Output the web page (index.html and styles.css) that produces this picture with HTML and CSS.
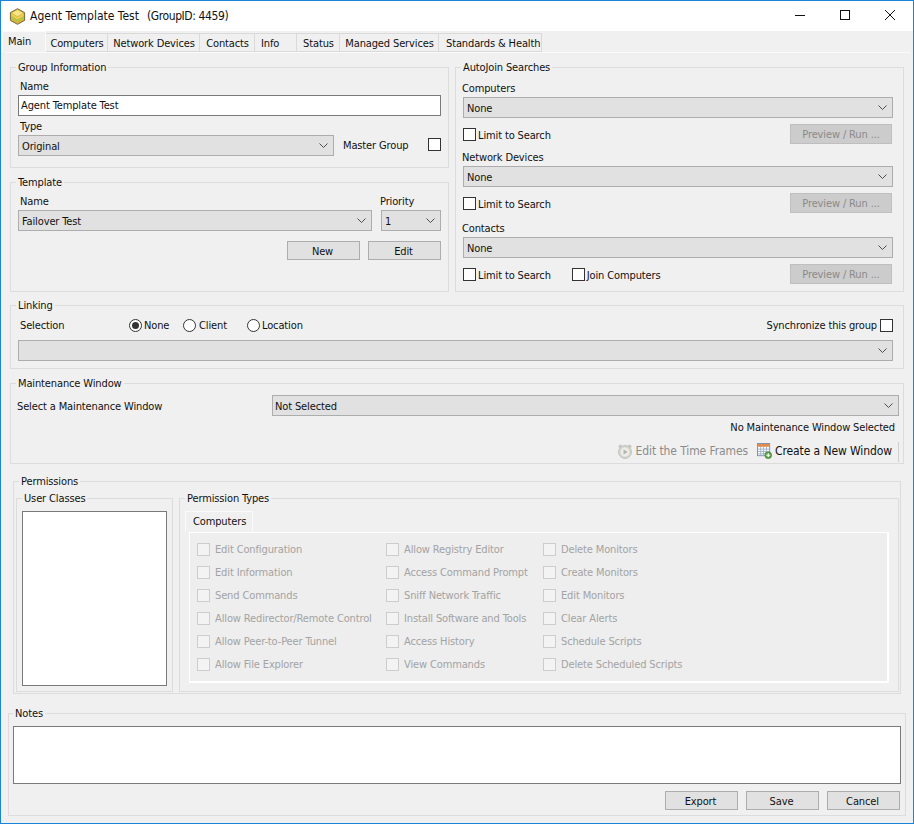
FILE: index.html
```html
<!DOCTYPE html>
<html lang="en">
<head>
<meta charset="utf-8">
<title>Agent Template Test</title>
<link rel="stylesheet" href="styles.css">
</head>
<body>
<svg class="defs" width="0" height="0" aria-hidden="true"><symbol id="chev" viewBox="0 0 9 5"><path d="M.5.5 4.5 4.5 8.5.5" fill="none" stroke="#4d4d4d" stroke-width="1"/></symbol></svg>
<div class="window">
  <header class="titlebar">
    <svg class="appicon" width="17" height="17" viewBox="0 0 17 17"><path d="M8.5.7 15.6 4.6V12.4L8.5 16.3 1.4 12.4V4.6Z" fill="#d9b53c" stroke="#77693a"/><path d="M8.5 2 14 5 8.5 8.2 3 5Z" fill="#f6e68a"/><path d="M2.5 8 8.5 11.4 14.5 8V10L8.5 13.4 2.5 10Z" fill="#a8c94a"/><path d="M2.5 5.6 8.5 9 14.5 5.6V8L8.5 11.4 2.5 8Z" fill="#eccd52"/></svg>
    <span class="title">Agent Template Test</span>
    <span class="title groupid">(GroupID: 4459)</span>
    <div class="controls">
      <svg width="12" height="12" viewBox="0 0 12 12"><path d="M1 6.5H11" stroke="#111" fill="none"/></svg>
      <svg width="12" height="12" viewBox="0 0 12 12"><rect x="1.5" y="1.5" width="9" height="9" stroke="#111" fill="none"/></svg>
      <svg width="12" height="12" viewBox="0 0 12 12"><path d="M1 1 11 11M11 1 1 11" stroke="#111" fill="none"/></svg>
    </div>
  </header>
  <nav class="tabs">
    <span class="tab active">Main</span>
    <span class="tab">Computers</span>
    <span class="tab">Network Devices</span>
    <span class="tab">Contacts</span>
    <span class="tab tab-left">Info</span>
    <span class="tab">Status</span>
    <span class="tab">Managed Services</span>
    <span class="tab tab-last">Standards &amp; Health</span>
  </nav>
  <main class="panel">
    <div class="top-grid">
      <div class="left-col">
        <fieldset class="box group-info">
          <legend>Group Information</legend>
          <label class="lbl">Name</label>
          <div class="input">Agent Template Test</div>
          <label class="lbl lbl-type">Type</label>
          <div class="type-row">
            <div class="select type-select"><span>Original</span><svg class="chev"><use href="#chev"/></svg></div>
            <span class="master">Master Group</span>
            <span class="check"></span>
          </div>
        </fieldset>
        <fieldset class="box template">
          <legend>Template</legend>
          <div class="tpl-grid">
            <label class="lbl">Name</label>
            <label class="lbl">Priority</label>
            <div class="select"><span>Failover Test</span><svg class="chev"><use href="#chev"/></svg></div>
            <div class="select prio"><span>1</span><svg class="chev"><use href="#chev"/></svg></div>
          </div>
          <div class="tpl-btns">
            <button class="btn">New</button>
            <button class="btn">Edit</button>
          </div>
        </fieldset>
      </div>
      <fieldset class="box autojoin">
        <legend>AutoJoin Searches</legend>
        <label class="aj-lbl first">Computers</label>
        <div class="select"><span>None</span><svg class="chev"><use href="#chev"/></svg></div>
        <div class="aj-row"><span class="check"></span><span class="chk-text">Limit to Search</span><button class="btn-dis">Preview / Run ...</button></div>
        <label class="aj-lbl">Network Devices</label>
        <div class="select"><span>None</span><svg class="chev"><use href="#chev"/></svg></div>
        <div class="aj-row"><span class="check"></span><span class="chk-text">Limit to Search</span><button class="btn-dis">Preview / Run ...</button></div>
        <label class="aj-lbl contacts">Contacts</label>
        <div class="select"><span>None</span><svg class="chev"><use href="#chev"/></svg></div>
        <div class="aj-row"><span class="check"></span><span class="chk-text join-gap">Limit to Search</span><span class="check"></span><span class="chk-text">Join Computers</span><button class="btn-dis">Preview / Run ...</button></div>
      </fieldset>
    </div>
    <fieldset class="box linking">
      <legend>Linking</legend>
      <div class="link-row">
        <span class="sel-lbl">Selection</span>
        <span class="radio on"></span><span class="r-text r-none">None</span>
        <span class="radio"></span><span class="r-text r-client">Client</span>
        <span class="radio"></span><span class="r-text">Location</span>
        <span class="sync">Synchronize this group</span>
        <span class="check"></span>
      </div>
      <div class="select"><span></span><svg class="chev"><use href="#chev"/></svg></div>
    </fieldset>
    <fieldset class="box maint">
      <legend>Maintenance Window</legend>
      <div class="m-row">
        <span class="m-lbl">Select a Maintenance Window</span>
        <div class="select m-select"><span>Not Selected</span><svg class="chev"><use href="#chev"/></svg></div>
      </div>
      <div class="m-status">No Maintenance Window Selected</div>
      <div class="m-tools">
        <svg width="16" height="17" viewBox="0 0 17 17"><path d="M2 4 4.500 1.500M15 4 12.500 1.500" stroke="#c4c4c0" stroke-width="2.200" fill="none"/><circle cx="8.500" cy="9" r="6.800" fill="#d6d6d0" stroke="#bcbcb6"/><circle cx="8.500" cy="9" r="4.800" fill="#ecece8"/><path d="M7 6.300 11.300 9 7 11.700Z" fill="#b4b4ae"/></svg>
        <span class="tool dis">Edit the Time Frames</span>
        <svg class="cal" width="15" height="16" viewBox="0 0 16 17"><rect x=".5" y=".5" width="13" height="13" fill="#fff" stroke="#7d8ea8"/><rect x="1" y="1" width="12" height="3" fill="#e08a4c"/><path d="M1 6.500H13M1 9H13M1 11.500H13M4 4V13M7 4V13M10 4V13" stroke="#9fb2c9" fill="none"/><circle cx="12" cy="13" r="3.600" fill="#58a845" stroke="#3e7f30" stroke-width=".7"/><path d="M12 11V15M10 13H14" stroke="#fff" stroke-width="1.200"/></svg>
        <span class="tool">Create a New Window</span>
        <span class="tool-sep"></span>
      </div>
    </fieldset>
    <fieldset class="box perms">
      <legend>Permissions</legend>
      <div class="perm-grid">
        <fieldset class="box classes">
          <legend>User Classes</legend>
          <div class="listbox"></div>
        </fieldset>
        <fieldset class="box types">
          <legend>Permission Types</legend>
          <span class="subtab">Computers</span>
          <div class="subpanel">
            <div class="p-item"><span class="p-check"></span>Edit Configuration</div>
            <div class="p-item"><span class="p-check"></span>Allow Registry Editor</div>
            <div class="p-item"><span class="p-check"></span>Delete Monitors</div>
            <div class="p-item"><span class="p-check"></span>Edit Information</div>
            <div class="p-item"><span class="p-check"></span>Access Command Prompt</div>
            <div class="p-item"><span class="p-check"></span>Create Monitors</div>
            <div class="p-item"><span class="p-check"></span>Send Commands</div>
            <div class="p-item"><span class="p-check"></span>Sniff Network Traffic</div>
            <div class="p-item"><span class="p-check"></span>Edit Monitors</div>
            <div class="p-item"><span class="p-check"></span>Allow Redirector/Remote Control</div>
            <div class="p-item"><span class="p-check"></span>Install Software and Tools</div>
            <div class="p-item"><span class="p-check"></span>Clear Alerts</div>
            <div class="p-item"><span class="p-check"></span>Allow Peer-to-Peer Tunnel</div>
            <div class="p-item"><span class="p-check"></span>Access History</div>
            <div class="p-item"><span class="p-check"></span>Schedule Scripts</div>
            <div class="p-item"><span class="p-check"></span>Allow File Explorer</div>
            <div class="p-item"><span class="p-check"></span>View Commands</div>
            <div class="p-item"><span class="p-check"></span>Delete Scheduled Scripts</div>
          </div>
        </fieldset>
      </div>
    </fieldset>
    <fieldset class="box notes">
      <legend>Notes</legend>
      <div class="notes-area"></div>
      <div class="actions">
        <button class="btn">Export</button>
        <button class="btn">Save</button>
        <button class="btn">Cancel</button>
      </div>
    </fieldset>
  </main>
</div>
</body>
</html>
```
FILE: styles.css
```css
* { box-sizing: border-box; }
html, body { margin: 0; padding: 0; }
body { width: 914px; height: 824px; overflow: hidden; font-family: "DejaVu Sans Condensed", "DejaVu Sans", sans-serif; font-size: 11px; line-height: 14px; letter-spacing: -0.13px; color: #111; }
.defs { position: absolute; }
.window { width: 914px; height: 824px; border: 1px solid #1a84d8; background: #f0f0f0; display: flex; flex-direction: column; }
.titlebar { height: 30px; flex: none; background: #fff; display: flex; align-items: center; padding-left: 8px; }
.appicon { margin-right: 4px; }
.title { font-size: 12px; letter-spacing: 0; color: #111; }
.groupid { margin-left: 8px; letter-spacing: -0.4px; }
.controls { margin-left: auto; margin-top: -2px; display: flex; gap: 33px; padding-right: 17px; }
.tabs { height: 21px; flex: none; display: grid; grid-template-columns: 44px 62px 92px 55px 42px 43px 99px 103px; justify-content: start; padding-left: 1px; align-items: end; }
.tab { height: 19px; border: 1px solid #dadada; border-left: 0; text-align: center; line-height: 20px; padding-left: 1px; background: #f0f0f0; }
.tab.tab-left { text-align: left; padding-left: 6px; }
.tab.tab-last { text-align: left; padding-left: 7px; }
.tab.active { height: 21px; border: 1px solid #fafafa; border-bottom: 0; line-height: 19px; text-align: left; padding-left: 5px; }
.panel { flex: 1; margin: 0 3px 0 4px; border-top: 1px solid #fafafa; padding: 7px 6px 0 5px; display: flex; flex-direction: column; }
.top-grid { display: grid; grid-template-columns: 439px 449px; gap: 6px; }
.left-col { display: flex; flex-direction: column; gap: 7px; }
.box { margin: 0; padding: 0 7px; border: 1px solid #dcdcdc; min-width: 0; flex: none; }
.box > legend { padding: 0 2px; margin-left: -2px; height: 14px; line-height: 16px; }
.lbl { display: block; padding-left: 2px; height: 14px; line-height: 16px; }
.group-info { height: 108px; }
.group-info > .lbl:first-of-type { margin-top: 5px; }
.input { height: 21px; margin-top: 2px; border: 1px solid #7a7a7a; background: #fff; padding-left: 2px; line-height: 19px; }
.lbl-type { margin-top: 3px; }
.type-row { display: flex; align-items: center; margin-top: 2px; }
.select { height: 21px; border: 1px solid #adadad; background: #e1e1e1; display: flex; align-items: center; justify-content: space-between; padding: 0 5px 0 3px; }
.select span { padding-top: 2px; }
.chev { width: 9px; height: 5px; flex: none; }
.type-select { width: 316px; }
.master { margin-left: 9px; }
.check { display: block; width: 13px; height: 13px; flex: none; border: 1px solid #333; background: #fff; }
.type-row .check { margin-left: auto; margin-top: -2px; }
.template { height: 117px; }
.tpl-grid { display: grid; grid-template-columns: 354px 60px; column-gap: 9px; row-gap: 2px; padding-top: 5px; }
.tpl-grid .lbl:nth-child(2) { padding-left: 0; margin-left: -1px; }
.prio { padding-left: 3px; }
.tpl-btns { display: flex; justify-content: flex-end; gap: 8px; margin-top: 10px; }
.btn { width: 73px; height: 19px; padding: 2px 2px 0 0; border: 1px solid #adadad; background: #e1e1e1; font: inherit; letter-spacing: inherit; color: #111; }
.autojoin { height: 232px; padding: 0 10px 0 7px; }
.aj-lbl { display: block; margin: 6px 0 2px -1px; height: 14px; line-height: 16px; }
.aj-lbl.first { margin-top: 7px; }
.aj-lbl.contacts { margin-top: 8px; }
.aj-row { height: 20px; margin-top: 6px; display: flex; align-items: center; }
.chk-text { margin-left: 2px; padding-top: 4px; }
.join-gap { margin-right: 21px; }
.btn-dis { margin: 0 1px 0 auto; width: 102px; height: 20px; padding: 2px 0 0; border: 1px solid #bfbfbf; background: #cccccc; color: #8a8a8a; font: inherit; letter-spacing: inherit; }
.linking { margin-top: 6px; height: 71px; padding: 0 10px 0 7px; }
.link-row { height: 14px; margin: 6px 0 8px; padding-left: 2px; display: flex; align-items: center; }
.sel-lbl { width: 109px; padding-top: 2px; }
.radio { width: 13px; height: 13px; flex: none; border: 1px solid #333; border-radius: 50%; background: #fff; display: flex; align-items: center; justify-content: center; }
.radio.on::after { content: ""; width: 7px; height: 7px; border-radius: 50%; background: #333; }
.r-text { margin-left: 2px; padding-top: 2px; }
.r-none { width: 39px; }
.r-client { width: 48px; margin-left: 3px; }
.sync { margin-left: auto; margin-right: 3px; padding-top: 2px; }
.maint { margin-top: 7px; height: 88px; padding: 0 4px 0 6px; }
.maint > legend { margin-left: -1px; }
.m-row { display: flex; align-items: center; margin-top: 5px; }
.m-lbl { width: 255px; padding-top: 2px; }
.m-select { flex: 1; padding-left: 2px; }
.m-status { text-align: right; margin-top: 5px; padding-right: 4px; }
.m-tools { height: 22px; margin-top: 5px; display: flex; align-items: center; justify-content: flex-end; }
.tool { margin-left: 3px; font-size: 12px; letter-spacing: -0.1px; }
.tool.dis { color: #8c8c8c; margin-right: 9px; }
.tool-sep { width: 1px; height: 20px; align-self: flex-end; background: #cfcfcf; margin-left: 6px; }
.perms { margin: 10px 3px 0 3px; height: 220px; padding: 0 1px 0 2px; }
.perms > legend { margin-left: 3px; }
.perm-grid { display: grid; grid-template-columns: 157px 720px; gap: 6px; margin-top: 3px; }
.classes { height: 201px; padding: 0 5px; }
.classes > legend { margin-left: 0; }
.listbox { width: 145px; height: 175px; margin-top: 6px; border: 1px solid #7a7a7a; background: #fff; }
.types { height: 201px; padding: 0 9px 0 5px; }
.types > legend { margin-left: 0; }
.subtab { display: block; width: 68px; height: 21px; margin-top: 6px; border: 1px solid #fafafa; border-bottom: 0; padding-left: 7px; line-height: 20px; }
.subpanel { margin-left: 4px; height: 151px; border: 1px solid #fff; border-width: 1px 2px 2px 1px; background: #eeeeee; padding: 5px 0 0 7px; display: grid; grid-template-columns: 189px 157px 1fr; grid-auto-rows: 23px; align-items: center; }
.p-item { display: flex; align-items: center; color: #a3a3a3; }
.p-check { width: 13px; height: 13px; margin-right: 5px; flex: none; border: 1px solid #cdcdcd; background: #f3f3f3; }
.notes { margin: 12px -2px 0 -2px; height: 110px; padding: 0 4px 0 4px; }
.notes > legend { margin-left: 0; }
.notes-area { height: 58px; margin-top: 6px; border: 1px solid #7a7a7a; background: #fff; }
.actions { display: flex; justify-content: flex-end; gap: 8px; margin-top: 7px; padding-right: 1px; }
```
